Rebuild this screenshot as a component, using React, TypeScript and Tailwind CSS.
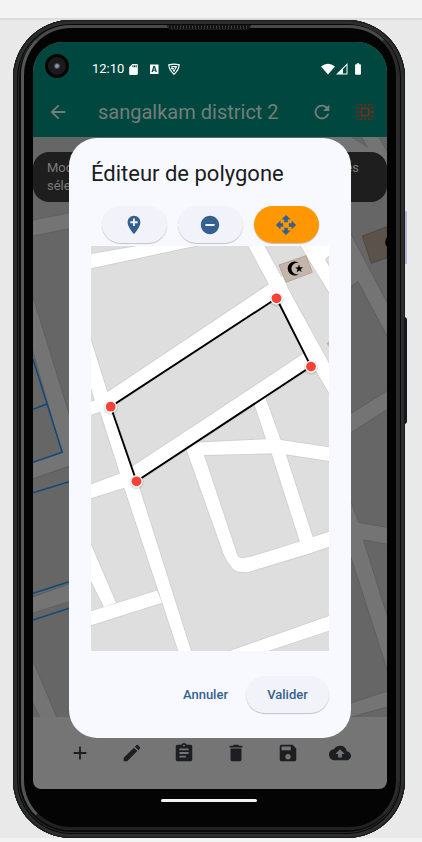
import React from "react";
import {
  MdAdd,
  MdAddLocation,
  MdArrowBack,
  MdAssignment,
  MdBackup,
  MdBatteryFull,
  MdDelete,
  MdEdit,
  MdOpenWith,
  MdRefresh,
  MdRemoveCircle,
  MdSave,
  MdSdCard,
  MdSelectAll,
} from "react-icons/md";

const backgroundRoads = [
  "-2,84 40,75.500 40,90.500 -2,99",
  "-2,155 36,278 38,284 38,328 -2,342 -2,326 29.300,315.500 -2,206",
  "-2,461 40,446 40,463 -2,476",
  "-2,520 24,582 8,582 -2,561",
  "328,-2 344,-2 356,18 356,48",
  "295,-2 318,0 340,14 310,22",
  "310,84 318,98 356,170 356,202 325.300,144 310,154",
  "356,253 310,282 310,300 356,271",
  "310,344 325.300,385.700 356,391 356,407 329.700,402.300 356,486 356,537 310,394",
  "310,569 356,554 356,569 310,582",
];

const editorRoads = [
  "-6,9 58,-2 113,-2 -6,23.600",
  "-4,157 5,154 16.300,146.300 178,38.300 192,30 200,50 185.300,52.500 20,161.500 11,165 -4,170",
  "156.300,-2 178,38.300 214,106.500 240,150 240,121 172.300,-2",
  "208.500,-2 240,49.500 240,24 234,13.300 240,8 240,-2",
  "-2,239 29,227.500 42.300,219.700 112,174 214,106.500 222,121 46,236 33.300,241.700 -2,253",
  "-2,88 16.300,146.300 21,161 46,236 48.300,241.700 101,408 88.300,408 33.300,241.700 29,227.500 9,165 3.700,154 -2,136",
  "-2,366 66,344.500 71,356.700 -2,380",
  "-2,294 25,356.700 13,361 -2,331",
  "162,154 175,193 180.700,207.500 209,296 222,292 194.700,208 189.700,194 173,148",
  "95.700,204 107,196.500 174.700,193.300 189.700,194 240,201.600 240,215.300 194.700,208.300 180.700,207.300 113,209 145.700,307.300 147.500,311 150.700,312.300 159.700,310.700 209,295.500 221.300,291.300 240,285 240,300 219,307.300 156.300,326.300 146,325.500 142,323 136,315 133.300,310",
  "130,408 240,369.300 240,384 168,408",
];

const vertices = [
  [185.5, 52.3],
  [220, 120.6],
  [45.5, 235.3],
  [19.7, 160.7],
];

function Roads({ shapes, fill, edge }: { shapes: string[]; fill: string; edge: string }) {
  return (
    <>
      <g fill={edge} stroke={edge} strokeWidth="1.800">
        {shapes.map((points) => (
          <polygon key={points} points={points} />
        ))}
      </g>
      <g fill={fill}>
        {shapes.map((points) => (
          <polygon key={points} points={points} />
        ))}
      </g>
    </>
  );
}

function Mosque() {
  return (
    <g>
      <path d="M4.500-5.500A7 7 0 1 0 4.500 5.500A5.800 5.800 0 1 1 4.500-5.500Z" />
      <path d="M4.500-4 5.600-1.300 8.600-1.400 6.300.600 7.300 3.500 4.600 1.900 2.200 3.600 2.900.700.700-1.200 3.500-1.300Z" />
    </g>
  );
}

function BackgroundMap() {
  return (
    <svg viewBox="0 0 354 580" preserveAspectRatio="xMidYMid slice" className="block h-full w-full bg-[#666666]" aria-hidden="true">
      <Roads shapes={backgroundRoads} fill="#747474" edge="#5f5f5f" />
      <path d="M329.300 99 354 89.700V120.700L338.300 126.300Z" fill="#5b524c" stroke="#4f4842" />
      <g transform="translate(359 105)">
        <Mosque />
      </g>
      <g fill="none" stroke="#10497a" strokeWidth="1.500">
        <path d="M0 222.300 29.300 315.300 0 325.300M0 272.300 14 267M0 355.700 36 344.700M0 456.300 36 444.700M0 483 36 471.300" />
      </g>
    </svg>
  );
}

function EditorMap() {
  return (
    <svg viewBox="0 0 238 405" preserveAspectRatio="xMidYMid slice" className="block h-full w-full bg-[#dedede]" role="img" aria-label="Polygone">
      <Roads shapes={editorRoads} fill="#ffffff" edge="#d0d0d0" />
      <path d="M188 19 215 9.700 221.300 26.300 195 36.300Z" fill="#c4b5ab" stroke="#b5a397" />
      <path d="M238 95 235.500 97.500 238 101Z" fill="#c4b5ab" />
      <g transform="translate(203.500 22.600)">
        <Mosque />
      </g>
      <polygon points={vertices.map((v) => v.join(",")).join(" ")} fill="none" stroke="#000" strokeWidth="1.900" />
      {vertices.map(([x, y]) => (
        <g key={x}>
          <circle cx={x} cy={y + 1} r="7.200" fill="#000" opacity="0.100" />
          <circle cx={x} cy={y} r="6.200" fill="#fff" />
          <circle cx={x} cy={y} r="4.900" fill="#f44336" />
        </g>
      ))}
    </svg>
  );
}

function StatusBar() {
  return (
    <div className="flex h-[54px] items-center pl-[59px] pr-[22px] text-white">
      <span className="text-[13px] leading-4">12:10</span>
      <MdSdCard className="ml-[3px] size-[13px]" />
      <svg className="ml-2 size-3" viewBox="0 0 12 12" aria-hidden="true">
        <path fill="currentColor" fillRule="evenodd" d="M2 1.500h8.500V11H2ZM5.400 3 3.500 9h1.300l.4-1.200h2l.4 1.200h1.300L7 3Zm.8 1.600.7 2.100H5.500Z" />
      </svg>
      <svg className="ml-2 size-3" viewBox="0 0 12 12" aria-hidden="true">
        <path d="M.800 1.800Q6 .400 11.200 1.800Q11 7 6 11.200Q1 7 .800 1.800Z" fill="none" stroke="currentColor" strokeWidth="1.200" />
        <path d="M3.500 3.500 8.500 3.500 6 8.500ZM3 5.500 6 5.500M6 4 9 4" fill="none" stroke="currentColor" />
      </svg>
      <svg className="ml-auto h-3 w-[14px]" viewBox="0 0 14 12" aria-hidden="true">
        <path d="M0 3.500Q7-2 14 3.500L7 11.500Z" fill="currentColor" />
      </svg>
      <svg className="ml-px size-3" viewBox="0 0 12 12" aria-hidden="true">
        <path d="M0 11.500 11.500 0V11.500ZM7 10.500h3.500V2.500L7 6Z" fill="currentColor" fillRule="evenodd" />
      </svg>
      <MdBatteryFull className="ml-[3px] size-[14px]" />
    </div>
  );
}

function AppBar() {
  return (
    <header className="flex h-[41px] items-start pl-[14px] pr-[11px] text-[#727e7b]">
      <button type="button" aria-label="Retour" className="mt-[5px]">
        <MdArrowBack className="size-[22px]" />
      </button>
      <h1 className="ml-[29px] flex-1 whitespace-nowrap text-[20px] leading-8">sangalkam district 2</h1>
      <button type="button" aria-label="Actualiser" className="mt-[5px]">
        <MdRefresh className="size-[22px]" />
      </button>
      <button type="button" aria-label="Tout sélectionner" className="ml-[21px] mt-[5px] text-[#7e2a16]">
        <MdSelectAll className="size-[22px]" />
      </button>
    </header>
  );
}

const tools = [
  { label: "Ajouter", Icon: MdAdd },
  { label: "Modifier", Icon: MdEdit },
  { label: "Détails", Icon: MdAssignment },
  { label: "Supprimer", Icon: MdDelete },
  { label: "Enregistrer", Icon: MdSave },
  { label: "Envoyer", Icon: MdBackup },
];

const pill = "flex h-[37px] items-center justify-center rounded-full shadow-[0_1px_1px_rgba(0,0,0,0.22)]";

const modes = [
  { label: "Ajouter un point", Icon: MdAddLocation, color: "bg-[#f2f3fa]" },
  { label: "Supprimer un point", Icon: MdRemoveCircle, color: "bg-[#f2f3fa]" },
  { label: "Déplacer", Icon: MdOpenWith, color: "bg-[#ff9800]" },
];

function PolygonDialog() {
  return (
    <section
      role="dialog"
      aria-labelledby="dialog-title"
      className="absolute inset-x-9 bottom-[51px] top-24 flex flex-col rounded-[28px] bg-[#f8f9ff] px-[22px] pb-[25px] pt-[22px]"
    >
      <h2 id="dialog-title" className="whitespace-nowrap text-[22px] leading-7 text-[#191c20]">
        Éditeur de polygone
      </h2>
      <div className="mt-[18px] flex justify-center gap-[11px] text-[#36618e]">
        {modes.map(({ label, Icon, color }) => (
          <button key={label} type="button" aria-label={label} className={`${pill} ${color} w-[65px]`}>
            <Icon className="size-[22px]" />
          </button>
        ))}
      </div>
      <div className="mt-[3px] min-h-0 flex-1">
        <EditorMap />
      </div>
      <div className="mt-[25px] flex items-center justify-end gap-[18px] text-[13px] font-medium text-[#36618e]">
        <button type="button">Annuler</button>
        <button type="button" className={`${pill} w-[83px] bg-[#f2f3fa]`}>
          Valider
        </button>
      </div>
    </section>
  );
}

export default function App() {
  return (
    <div className="flex min-h-screen flex-col bg-[#e9e9e9] font-['Roboto',sans-serif]">
      <div className="h-5 border-b-2 border-[#dcdcdc] bg-[#f3f3f3]" />
      <main className="relative ml-[13px] mr-[17px] flex flex-1 flex-col rounded-[58px] bg-[#303231] pb-2 pl-2 pr-[6px] pt-[5px] shadow-[inset_0_0_0_1px_#1b1b1b,inset_0_0_0_4px_#2c2e2d,inset_0_0_0_5px_#090909,inset_0_0_0_6px_#292929,inset_0_0_0_8px_#0b0b0b]">
        <div className="absolute -right-[2px] top-[191px] h-[53px] w-[2px] bg-[#b7b6d6]" />
        <div className="absolute -right-[2px] top-[297px] h-[107px] w-[3px] rounded-r-sm bg-[#17181b]" />
        <div className="absolute left-1/2 top-[5px] h-[5px] w-[84px] -translate-x-1/2 rounded-b-md border border-[#1b1b1b] bg-[repeating-linear-gradient(90deg,#3d3d3d_0_1px,#111_1px_3px)]" />
        <div className="flex flex-1 flex-col rounded-[50px] border-[3px] border-b-[#222222] border-l-[#565656] border-r-[#2b2b2b] border-t-[#4a4a4a] bg-[#040404] pb-[38px] pl-[9px] pr-[9px] pt-[14px]">
          <div className="relative flex flex-1 flex-col overflow-hidden rounded-b-lg rounded-t-[30px] bg-[#757575]">
            <div className="bg-[#00473f]">
              <StatusBar />
              <AppBar />
            </div>
            <div className="absolute left-3 top-3 flex size-6 items-center justify-center rounded-full border-[3px] border-[#050505] bg-[#1b1b1b]">
              <span className="size-[6px] rounded-full border border-[#444b58] bg-[#8995ac]" />
            </div>
            <div className="relative min-h-0 flex-1 basis-[580px]">
              <BackgroundMap />
              <p className="absolute inset-x-0 top-[15px] flex h-[50px] justify-between rounded-[16px] bg-[#1e1e1e] px-[14px] pt-[7px] text-[13px] leading-[18px] text-[#7b7b7b]">
                <span>
                  Mod
                  <br />
                  séle
                </span>
                <span className="pr-[14px]">es</span>
              </p>
            </div>
            <nav className="flex h-[72px] shrink-0 items-center justify-around px-[21px] text-[#1c1e22]">
              {tools.map(({ label, Icon }) => (
                <button key={label} type="button" aria-label={label}>
                  <Icon className="size-[22px]" />
                </button>
              ))}
            </nav>
            <PolygonDialog />
          </div>
        </div>
        <div className="absolute bottom-9 left-1/2 h-[3px] w-24 -translate-x-1/2 rounded-full bg-[#f2f2f2]" />
      </main>
      <div className="h-1 bg-[#f3f3f3]" />
    </div>
  );
}
